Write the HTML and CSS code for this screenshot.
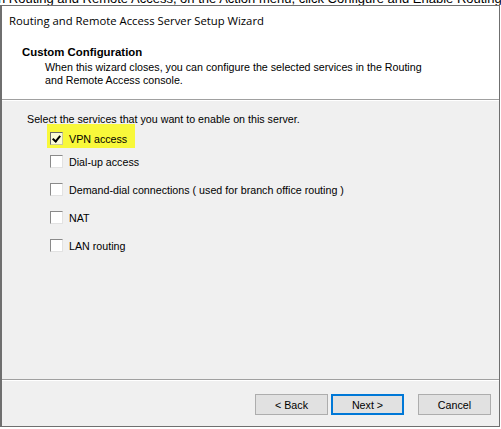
FILE: index.html
```html
<!DOCTYPE html>
<html lang="en">
<head>
    <meta charset="UTF-8">
    <title>Routing and Remote Access Server Setup Wizard</title>
    <link rel="stylesheet" href="styles.css">
</head>
<body>
    <div class="behind"><span>n Routing and Remote Access, on the Action menu, click Configure and Enable Routing</span></div>
    <div class="window">
        <div class="header">
            <div class="title">Routing and Remote Access Server Setup Wizard</div>
            <div class="heading">Custom Configuration</div>
            <div class="desc">When this wizard closes, you can configure the selected services in the Routing<br>and Remote Access console.</div>
        </div>
        <div class="content">
            <p class="prompt">Select the services that you want to enable on this server.</p>
            <div class="options">
                <label class="option highlight"><span class="box checked"></span>VPN access</label>
                <label class="option first"><span class="box"></span>Dial-up access</label>
                <label class="option"><span class="box"></span>Demand-dial connections ( used for branch office routing )</label>
                <label class="option"><span class="box"></span>NAT</label>
                <label class="option"><span class="box"></span>LAN routing</label>
            </div>
        </div>
        <div class="footer">
            <button class="btn">&lt; Back</button>
            <button class="btn default">Next &gt;</button>
            <button class="btn cancel">Cancel</button>
        </div>
    </div>
</body>
</html>
```

FILE: styles.css
```css
body {
    margin: 0;
    background-color: #ffffff;
    font-family: "Liberation Sans", Arial, sans-serif;
    font-size: 10.7px;
    color: #000000;
    overflow: hidden;
}
.behind {
    height: 5px;
    overflow: hidden;
    white-space: nowrap;
    font-size: 13px;
    line-height: 13px;
}
.behind span {
    display: block;
    margin-top: -8px;
    margin-left: -2px;
}
.window {
    width: 497px;
    height: 420px;
    border: 1px solid #6f6f6f;
    border-left-width: 2px;
    display: flex;
    flex-direction: column;
    background-color: #f0f0f0;
}
.header {
    background-color: #ffffff;
    height: 93px;
    flex-shrink: 0;
    border-bottom: 1px solid #a0a0a0;
    box-shadow: 0 1px 0 #ffffff;
}
.title {
    font-family: "Open Sans", sans-serif;
    font-size: 11.3px;
    line-height: 16px;
    padding: 7px 0 0 7px;
}
.heading {
    font-weight: bold;
    font-size: 11.4px;
    line-height: 14px;
    margin-top: 16px;
    padding-left: 20px;
}
.desc {
    line-height: 13px;
    margin-top: 2px;
    padding-left: 43px;
}
.content {
    flex: 1;
    padding: 12px 0 0 25px;
    border-bottom: 1px solid #a0a0a0;
    box-shadow: 0 1px 0 #ffffff;
}
.prompt {
    margin: 0;
    line-height: 14px;
}
.options {
    display: flex;
    flex-direction: column;
    align-items: flex-start;
    padding-left: 20px;
}
.option {
    display: flex;
    align-items: center;
    gap: 6px;
    height: 13px;
    margin-top: 15px;
    padding-left: 3px;
}
.highlight {
    background-color: #f8f83a;
    margin-top: -2px;
    padding: 8px 8px 3px 3px;
}
.option.first {
    margin-top: 7px;
}
.box {
    width: 11px;
    height: 11px;
    background-color: #ffffff;
    border: 1px solid;
    border-color: #8a8a8a #e2e2e2 #e2e2e2 #8a8a8a;
    position: relative;
}
.checked {
    background-color: #fbfbd8;
    border-color: #6a6a6a #c8c8a0 #c8c8a0 #6a6a6a;
}
.checked::after {
    content: "";
    position: absolute;
    left: 3px;
    top: 1px;
    width: 3px;
    height: 6px;
    border: solid #000000;
    border-width: 0 2px 2px 0;
    transform: rotate(40deg);
}
.footer {
    height: 46px;
    flex-shrink: 0;
    display: flex;
    align-items: flex-start;
    padding: 14px 0 0 253px;
    box-sizing: border-box;
    gap: 3px;
}
.btn {
    width: 73px;
    height: 21px;
    font-family: "Liberation Sans", Arial, sans-serif;
    font-size: 10.7px;
    color: #000000;
    background-color: #e1e1e1;
    border: 1px solid #adadad;
    padding: 0;
}
.default {
    border: 2px solid #0078d7;
}
.cancel {
    margin-left: 11px;
}
```
